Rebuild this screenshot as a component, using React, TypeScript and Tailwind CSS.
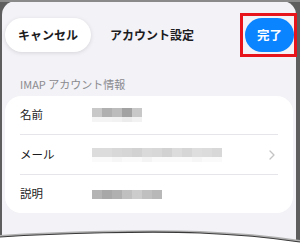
import React from "react";

const Blur = ({ cells, light }: { cells: string[]; light: string[] }) => (
  <div className="flex flex-col">
    <div className="flex">
      {cells.map((c, i) => (
        <div key={i} className="w-[10px] h-[9px]" style={{ background: c }} />
      ))}
    </div>
    <div className="flex">
      {light.map((c, i) => (
        <div key={i} className="w-[10px] h-[5px]" style={{ background: c }} />
      ))}
    </div>
  </div>
);

export default function App() {
  const font = { fontFamily: '"Noto Sans CJK JP", "Noto Sans", sans-serif' };
  return (
    <div className="relative w-[300px] h-[243px] bg-[#5e5e5e] overflow-hidden" style={font}>
      <div className="absolute left-0 top-0 w-[300px] h-[2px] bg-[#8a8a8a]" />
      <div className="ml-[2px] pt-[1px] w-[294px] h-[243px]">
        <div className="h-full bg-[#f2f2f7] rounded-t-[14px] flex flex-col">
          {/* header */}
          <div className="flex items-center h-[34px] mt-[17px] pl-[3px] pr-[2px]">
            <div className="h-[34px] w-[86px] rounded-full bg-white shadow-[0_1px_4px_rgba(0,0,0,0.12)] flex items-center justify-center text-[12px] font-bold text-[#1c1c1e]">
              キャンセル
            </div>
            <div className="ml-[19px] text-[12px] font-bold text-[#1c1c1e]">アカウント設定</div>
            <div className="ml-auto h-[34px] w-[49px] rounded-full bg-[#0a84ff] flex items-center justify-center text-[12.5px] font-bold text-white">
              完了
            </div>
          </div>
          {/* section header */}
          <div className="mt-[25px] pl-[18px] text-[11px] text-[#8a8a8e] leading-[14px]">IMAP アカウント情報</div>
          {/* card */}
          <div className="mt-[5px] mx-[3px] bg-white rounded-[16px] pl-[15px] pr-[15px]">
            <div className="flex items-center h-[38px]">
              <div className="w-[72px] text-[11.5px] text-[#1c1c1e]">名前</div>
              <Blur
                cells={["#c8c8c8", "#b0b0b0", "#bcbcbc", "#a2a2a2", "#c8c8c8"]}
                light={["#f4f4f4", "#f4f4f4", "#f2f2f2", "#ececec", "#f2f2f2"]}
              />
            </div>
            <div className="h-[1px] bg-[#e5e5ea]" />
            <div className="flex items-center h-[39px]">
              <div className="w-[72px] text-[11.5px] text-[#1c1c1e]">メール</div>
              <Blur
                cells={["#dcdcdc", "#dcdcdc", "#d8d8d8", "#d6d6d6", "#d2d2d2", "#dadada", "#d8d8d8", "#d2d2d2", "#dcdcdc", "#d6d6d6", "#dedede", "#dcdcdc", "#d8d8d8"]}
                light={["#fafafa", "#fafafa", "#f6f6f6", "#fafafa", "#fafafa", "#f4f4f4", "#fafafa", "#fafafa", "#fafafa", "#fafafa", "#f6f6f6", "#fafafa", "#fafafa"]}
              />
              <svg className="ml-auto mr-[3px]" width="6" height="10" viewBox="0 0 6 10">
                <path d="M1 1 L5 5 L1 9" fill="none" stroke="#c4c4c7" strokeWidth="1.3" strokeLinecap="round" strokeLinejoin="round" />
              </svg>
            </div>
            <div className="h-[1px] bg-[#e5e5ea]" />
            <div className="flex items-center h-[38px]">
              <div className="w-[72px] text-[11.5px] text-[#1c1c1e]">説明</div>
              <div className="flex">
                {["#b4b4b4", "#a8a8a8", "#b0b0b0", "#c0c0c0", "#cccccc", "#c0c0c0", "#b8b8b8"].map((c, i) => (
                  <div key={i} className="w-[10px] h-[9px]" style={{ background: c }} />
                ))}
              </div>
            </div>
          </div>
        </div>
      </div>
      {/* torn bottom edge */}
      <svg className="absolute left-0 top-[226px]" width="300" height="17" viewBox="0 0 300 17">
        <path d="M0 11 C 60 7, 150 5, 200 7 S 280 13, 300 16 L300 17 L0 17 Z" fill="#ffffff" />
        <path d="M0 10 C 60 6, 150 4, 200 6 S 280 12, 300 15" fill="none" stroke="#b0b0b0" strokeWidth="2" />
        <path d="M0 11 C 60 7, 150 5, 200 7 S 280 13, 300 16" fill="none" stroke="#3a3a3a" strokeWidth="1.2" />
      </svg>
      {/* red highlight */}
      <div className="absolute left-[240px] top-[13px] w-[57px] h-[44px] border-[3px] border-[#e8141c]" />
    </div>
  );
}
